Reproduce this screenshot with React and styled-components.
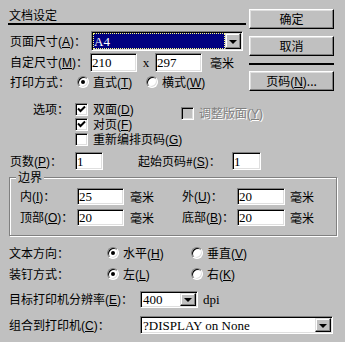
import React from 'react'
import styled, { createGlobalStyle } from 'styled-components'

const GlobalStyle = createGlobalStyle`
  html, body {
    margin: 0;
    padding: 0;
    background: #c0c0c0;
  }
  body {
    font-family: "Noto Sans CJK SC", "Liberation Sans", sans-serif;
    font-size: 12px;
    color: #000;
    text-autospace: no-autospace;
    text-spacing-trim: space-all;
  }
  u {
    text-decoration: underline;
    text-underline-offset: 1px;
  }
`;

// mnemonic in parentheses, e.g. (A)
const K = ({ c }) => <Key>(<u>{c}</u>)</Key>;

function App() {
  return (
    <Dialog>
      <GlobalStyle />
      <Top>
        <LeftCol>
          <Title>文档设定</Title>
          <Row $h={20} $mt={6} $pl={2}>
            <Label $w={81}>页面尺寸<K c="A" />：</Label>
            <Field $w={152} $h={20}>
              <Value $active>A4</Value>
              <Arrow><Tri /></Arrow>
            </Field>
          </Row>
          <Row $h={19} $mt={2} $pl={2}>
            <Label $w={80}>自定尺寸<K c="M" />：</Label>
            <Field $w={47} $h={19}>210</Field>
            <Times>x</Times>
            <Field $w={47} $h={19}>297</Field>
            <Unit $ml={8}>毫米</Unit>
          </Row>
          <Row $h={16} $mt={2} $pl={2}>
            <Label $w={67}>打印方式：</Label>
            <Choice $w={69}>
              <Radio><Dot /></Radio>
              <span>直式<K c="T" /></span>
            </Choice>
            <Choice>
              <Radio />
              <span>横式<K c="W" /></span>
            </Choice>
          </Row>
          <Row $h={14} $mt={12} $pl={25}>
            <Label $w={42}>选项：</Label>
            <Choice $w={106} $gap={5}>
              <Check><Tick /></Check>
              <span>双面<K c="D" /></span>
            </Choice>
            <Choice $gap={5} $off $shift={9}>
              <Check $off />
              <span>调整版面<K c="Y" /></span>
            </Choice>
          </Row>
          <Row $h={14} $mt={1} $pl={67}>
            <Choice $gap={5}>
              <Check><Tick /></Check>
              <span>对页<K c="F" /></span>
            </Choice>
          </Row>
          <Row $h={14} $mt={1} $pl={67}>
            <Choice $gap={5}>
              <Check />
              <span>重新编排页码<K c="G" /></span>
            </Choice>
          </Row>
        </LeftCol>
        <ButtonCol>
          <Button>确定</Button>
          <Button $mt={7}>取消</Button>
          <Separator />
          <Button>页码<K c="N" />...</Button>
        </ButtonCol>
      </Top>

      <Row $h={18} $mt={6} $pl={10}>
        <Label $w={65}>页数<K c="P" />：</Label>
        <Field $w={28} $h={18}>1</Field>
        <Label $w={94} $ml={35}>起始页码#<K c="S" />：</Label>
        <Field $w={29} $h={18}>1</Field>
      </Row>

      <Group>
        <Legend>边界</Legend>
        <GroupBody>
          <Row $h={17} $pl={10}>
            <Cell $w={162}>
              <Label $w={57}>内<K c="I" />：</Label>
              <Field $w={47} $h={17}>25</Field>
              <Unit $ml={6}>毫米</Unit>
            </Cell>
            <Label $w={55}>外<K c="U" />：</Label>
            <Field $w={48} $h={17}>20</Field>
            <Unit $ml={5}>毫米</Unit>
          </Row>
          <Row $h={17} $mt={4} $pl={10}>
            <Cell $w={162}>
              <Label $w={57}>顶部<K c="O" />：</Label>
              <Field $w={47} $h={17}>20</Field>
              <Unit $ml={6}>毫米</Unit>
            </Cell>
            <Label $w={55}>底部<K c="B" />：</Label>
            <Field $w={48} $h={17}>20</Field>
            <Unit $ml={5}>毫米</Unit>
          </Row>
        </GroupBody>
      </Group>

      <Row $h={16} $mt={9} $pl={9}>
        <Label $w={98}>文本方向：</Label>
        <Choice $w={84}>
          <Radio><Dot /></Radio>
          <span>水平<K c="H" /></span>
        </Choice>
        <Choice>
          <Radio />
          <span>垂直<K c="V" /></span>
        </Choice>
      </Row>
      <Row $h={16} $mt={5} $pl={9}>
        <Label $w={98}>装钉方式：</Label>
        <Choice $w={84}>
          <Radio><Dot /></Radio>
          <span>左<K c="L" /></span>
        </Choice>
        <Choice>
          <Radio />
          <span>右<K c="K" /></span>
        </Choice>
      </Row>
      <Row $h={17} $mt={9} $pl={9}>
        <Label $w={131}>目标打印机分辨率<K c="E" />：</Label>
        <Field $w={58} $h={17}>
          <Value>400</Value>
          <Arrow><Tri /></Arrow>
        </Field>
        <Latin $ml={5}>dpi</Latin>
      </Row>
      <Row $h={18} $mt={8} $pl={9}>
        <Label $w={131}>组合到打印机<K c="C" />：</Label>
        <Field $w={193} $h={18}>
          <Value>?DISPLAY on None</Value>
          <Arrow><Tri /></Arrow>
        </Field>
      </Row>
    </Dialog>
  )
}

const Tick = () => (
  <svg width="9" height="9" viewBox="0 0 9 9">
    <path d="M1 3.5 L3.5 6 L8 1.5" stroke="#000" strokeWidth="2" fill="none" />
  </svg>
);

const Dialog = styled.div`
    width: 345px;
    height: 342px;
    overflow: hidden;
    background: #c0c0c0;
`;

const Top = styled.div`
    display: flex;
    align-items: flex-start;
`;

const LeftCol = styled.div`
    width: 238px;
    margin-left: 8px;
`;

const Title = styled.div`
    height: 14px;
    line-height: 14px;
    padding: 8px 0 1px 1px;
    border-bottom: 2px solid #000;
`;

const Row = styled.div`
    display: flex;
    align-items: center;
    height: ${p => p.$h || 16}px;
    margin-top: ${p => p.$mt || 0}px;
    padding-left: ${p => p.$pl || 0}px;
    white-space: nowrap;
`;

const Label = styled.span`
    width: ${p => p.$w}px;
    margin-left: ${p => p.$ml || 0}px;
    flex-shrink: 0;
    line-height: 14px;
`;

const Key = styled.span`
    font-family: "Liberation Sans", sans-serif;
    font-size: 12px;
`;

const Cell = styled.div`
    display: flex;
    align-items: center;
    width: ${p => p.$w}px;
    flex-shrink: 0;
`;

const Field = styled.div`
    box-sizing: border-box;
    width: ${p => p.$w}px;
    height: ${p => p.$h}px;
    flex-shrink: 0;
    display: flex;
    align-items: center;
    padding: 1px;
    background: #fff;
    border: 1px solid;
    border-color: #808080 #fff #fff #808080;
    box-shadow: inset 1px 1px #000, inset -1px -1px #dfdfdf;
    font-family: "Liberation Serif", serif;
    font-size: 13px;
    line-height: 13px;
    overflow: hidden;
`;

const Value = styled.span`
    flex: 1;
    align-self: stretch;
    display: flex;
    align-items: center;
    padding-left: 1px;
    background: ${p => (p.$active ? '#000080' : 'transparent')};
    color: ${p => (p.$active ? '#fff' : '#000')};
    outline: ${p => (p.$active ? '1px dotted #ffff80' : 'none')};
    outline-offset: -1px;
`;

const Arrow = styled.span`
    box-sizing: border-box;
    width: 16px;
    align-self: stretch;
    display: flex;
    align-items: center;
    justify-content: center;
    background: #c0c0c0;
    border: 1px solid;
    border-color: #dfdfdf #000 #000 #dfdfdf;
    box-shadow: inset -1px -1px #808080, inset 1px 1px #fff;
`;

const Tri = styled.span`
    width: 0;
    height: 0;
    border-left: 4px solid transparent;
    border-right: 4px solid transparent;
    border-top: 4px solid #000;
    margin-top: 1px;
`;

const Times = styled.span`
    width: 18px;
    text-align: center;
    font-family: "Liberation Serif", serif;
    font-size: 13px;
`;

const Latin = styled.span`
    margin-left: ${p => p.$ml || 0}px;
    font-family: "Liberation Serif", serif;
    font-size: 13px;
`;

const Unit = styled.span`
    margin-left: ${p => p.$ml || 0}px;
`;

const Choice = styled.label`
    display: flex;
    align-items: center;
    gap: ${p => p.$gap || 4}px;
    width: ${p => (p.$w ? `${p.$w}px` : 'auto')};
    flex-shrink: 0;
    margin-top: ${p => p.$shift || 0}px;
    line-height: 14px;
    color: ${p => (p.$off ? '#808080' : '#000')};
    text-shadow: ${p => (p.$off ? '1px 1px #fff' : 'none')};
`;

const Radio = styled.span`
    box-sizing: border-box;
    width: 12px;
    height: 12px;
    border-radius: 50%;
    flex-shrink: 0;
    display: flex;
    align-items: center;
    justify-content: center;
    background: #fff;
    border: 1px solid;
    border-color: #808080 #fff #fff #808080;
    box-shadow: inset 1px 1px #000, inset -1px -1px #dfdfdf;
`;

const Dot = styled.span`
    width: 4px;
    height: 4px;
    border-radius: 50%;
    background: #000;
`;

const Check = styled.span`
    box-sizing: border-box;
    width: 13px;
    height: 13px;
    flex-shrink: 0;
    display: flex;
    align-items: center;
    justify-content: center;
    background: ${p => (p.$off ? '#c0c0c0' : '#fff')};
    border: 1px solid;
    border-color: #808080 #fff #fff #808080;
    box-shadow: inset 1px 1px #000, inset -1px -1px #dfdfdf;
`;

const ButtonCol = styled.div`
    width: 85px;
    margin-left: 3px;
    padding-top: 9px;
    display: flex;
    flex-direction: column;
`;

const Button = styled.button`
    box-sizing: border-box;
    width: 85px;
    height: 20px;
    margin-top: ${p => p.$mt || 0}px;
    padding: 0;
    background: #c0c0c0;
    border: 1px solid;
    border-color: #fff #000 #000 #fff;
    box-shadow: inset -1px -1px #808080, inset 1px 1px #dfdfdf;
    font-family: inherit;
    font-size: 12px;
    color: #000;
    line-height: 14px;
`;

const Separator = styled.div`
    height: 2px;
    background: #000;
    margin: 7px 0 6px;
`;

const Group = styled.fieldset`
    box-sizing: border-box;
    width: 328px;
    margin: 0 0 0 9px;
    padding: 0;
    border: 1px solid #808080;
    box-shadow: inset 1px 1px #fff, 1px 1px #fff;
`;

const Legend = styled.legend`
    margin-left: 6px;
    padding: 0 2px;
    line-height: 14px;
    background: #c0c0c0;
`;

const GroupBody = styled.div`
    padding: 4px 0 9px;
`;

export default App
